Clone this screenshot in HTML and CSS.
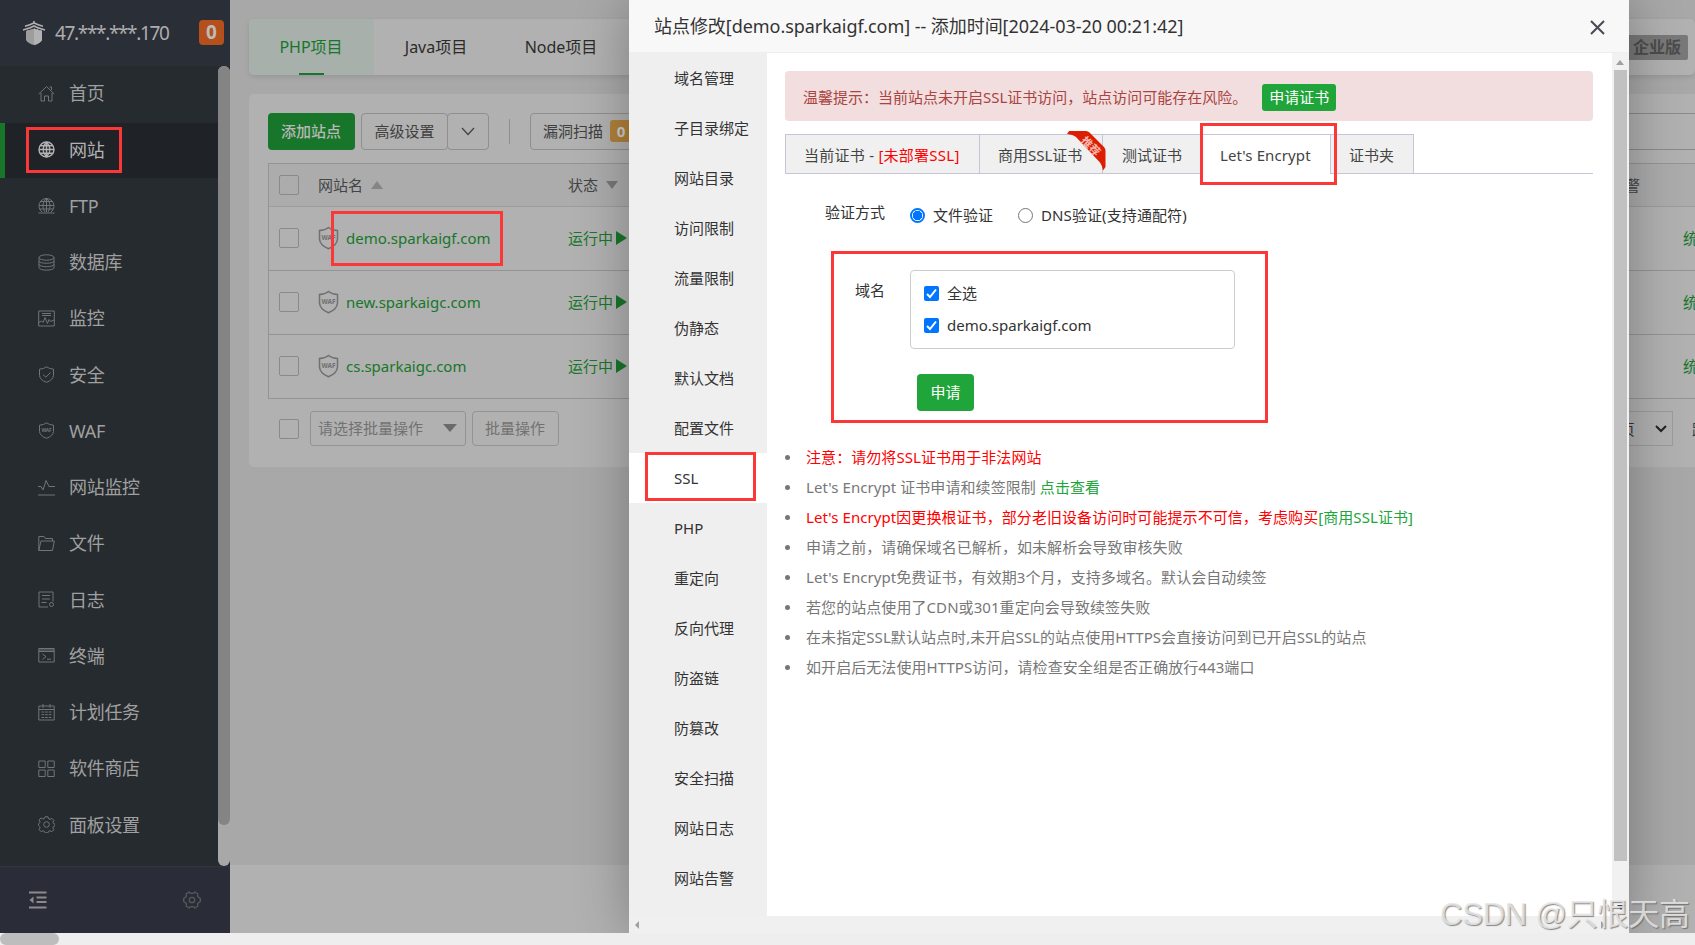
FILE: index.html
```html
<!DOCTYPE html>
<html lang="zh-CN">
<head>
<meta charset="utf-8">
<title>网站</title>
<link rel="stylesheet" href="styles.css">
</head>
<body>
<div class="app">
  <aside class="side">
    <div class="side-head">
      <svg class="logo" viewBox="0 0 24 26" width="24" height="26"><g fill="none" stroke="#b0b0b0" stroke-width="1.6"><path d="M12 1v3M3 6.2Q8 5 12 3Q16 5 21 6.2M1 10Q8 8.500 12 6Q16 8.500 23 10"/></g><path d="M4 10.500L12 8.500L20 10.500V20Q18 23.500 12 25Q6 23.500 4 20Z" fill="#9d9d9d"/><path d="M12 8.500L20 10.500V20Q18 23.500 12 25Z" fill="#b2b2b2"/><path d="M3 10.700L12 8L21 10.700" fill="none" stroke="#2a2e37" stroke-width="1" stroke-dasharray="2 1.500"/></svg>
      <span class="ip">47.***.***.170</span>
      <span class="count">0</span>
    </div>
    <div class="side-body">
      <nav class="menu">
        <a class="item"><svg viewBox="0 0 17 17"><path d="M.8 9L8.500 1.500L16.200 9M3 8v8h3.500v-5h4v5H14V8M11.500 2h2v3"/></svg>首页</a>
        <a class="item on"><svg viewBox="0 0 17 17"><circle cx="8.500" cy="8.500" r="7.500"/><path d="M1 8.500h15M8.500 1v15M2.500 4.800h12M2.500 12.200h12M8.500 1Q1.500 8.500 8.500 16M8.500 1Q15.500 8.500 8.500 16"/></svg>网站</a>
        <a class="item"><svg viewBox="0 0 17 17"><path d="M4 15A7.500 7.500 0 1 1 13 15M1 8.500h15M8.500 1v14M2.500 4.500h12M2 12h13M8.500 1Q2 8 7 15M8.500 1Q15 8 10 15M.5 16h16"/></svg><span>FTP</span></a>
        <a class="item"><svg viewBox="0 0 17 17"><ellipse cx="8.500" cy="3.500" rx="7.500" ry="2.700"/><path d="M1 3.500V13.500C1 17 16 17 16 13.500V3.500M1 7C1 10 16 10 16 7M1 10.300C1 13.500 16 13.500 16 10.300"/></svg>数据库</a>
        <a class="item"><svg viewBox="0 0 17 17"><path d="M.7 1h15.600v15H.7zM4 3.500h9M4 5.500h9M1 12.500l2.500-1.500 1.500 1.500 2-5 2.500 6 1.500-4 1.500 2 3.500-1.500"/></svg>监控</a>
        <a class="item"><svg viewBox="0 0 17 17"><path d="M8.500.8Q11 2.800 15.500 3.200V9.500Q15 14 8.500 16.300Q2 14 1.500 9.500V3.200Q6 2.800 8.500.8ZM5 8.500l2.800 2.700L12.500 6.500"/></svg>安全</a>
        <a class="item"><svg viewBox="0 0 17 17"><path d="M8.500.8Q11 2.800 15.500 3.200V9.500Q15 14 8.500 16.300Q2 14 1.500 9.500V3.200Q6 2.800 8.500.8Z"/><text x="8.500" y="10.200" class="waf-s">WAF</text></svg><span>WAF</span></a>
        <a class="item"><svg viewBox="0 0 17 17"><path d="M0 7.500h3l2 3.500L8 1.500l3 6h6M0 16h17"/></svg>网站监控</a>
        <a class="item"><svg viewBox="0 0 17 17"><path d="M.8 15.500V1.500H6L7.500 3.500H14.500V6M.8 15.500L3 6H16.300L14.500 15.500Z"/></svg>文件</a>
        <a class="item"><svg viewBox="0 0 17 17"><path d="M10 16H1V1H15V10.500M4 4.500h8M4 8h8M3.500 11.500h5"/><circle cx="13.500" cy="13.500" r="2"/></svg>日志</a>
        <a class="item"><svg viewBox="0 0 17 17"><path d="M.8 1.500h15.400v13.500H.8zM1 3h15M1 4.500h15M4.500 7l3.500 2.700-3.500 2.800M9 12.200h4"/></svg>终端</a>
        <a class="item"><svg viewBox="0 0 17 17"><path d="M.8 2h15.400v14H.8zM1 5.500h15M5 0v4M12 0v4"/><path d="M3.500 8h10M3.500 10.700h10M3.500 13.500h10" stroke-dasharray="2.700 .9"/></svg>计划任务</a>
        <a class="item"><svg viewBox="0 0 17 17"><path d="M.8 1h6.400v6.500H.8zM9.800 1h6.400v6.500H9.800zM.8 10h6.400v6.500H.8zM9.800 10h6.400v6.500H9.800z"/></svg>软件商店</a>
        <a class="item"><svg viewBox="0 0 17 17"><path d="M7 .8h3l.6 2 1.400.6 1.900-1 2 2-1 1.900.6 1.300 1.500.6v1.600l-1.500.6-.6 1.400 1 1.900-2 2-1.900-1-1.400.6-.6 1.500H7l-.6-1.500-1.400-.6-1.900 1-2-2 1-1.900-.6-1.400L.5 9.400V7.800l1-.6.6-1.300-1-1.900 2-2 1.900 1 1.400-.6z"/><circle cx="8.500" cy="8.500" r="2.800"/></svg>面板设置</a>
      </nav>
      <div class="side-track"><i></i></div>
    </div>
    <div class="side-foot">
      <svg width="18" height="18" viewBox="0 0 18 18"><path d="M0 1.500h17.500M7.500 6.500h10M7.500 11h10M0 16.500h17.500" stroke="#8b8b8b" stroke-width="2"/><path d="M4.500 5.500v7L.5 9z" fill="#8b8b8b"/></svg>
      <svg width="18" height="18" viewBox="0 0 18 18" fill="none" stroke="#555a5e" stroke-width="1.300"><path d="M6 1L7.500 2.300H10.500L12 1L14.800 2.800L14.600 5.500L17.300 7.500V10.500L14.600 12.500L14.800 15.200L12 17L10.500 15.700H7.500L6 17L3.200 15.200L3.400 12.500L.7 10.500V7.500L3.400 5.500L3.200 2.800Z" stroke-linejoin="round"/><circle cx="9" cy="9" r="2.700"/></svg>
    </div>
  </aside>

  <main class="main">
    <div class="tabs">
      <div class="tab on">PHP项目</div><div class="tab">Java项目</div><div class="tab">Node项目</div>
      <span class="edition">企业版</span>
    </div>
    <section class="panel">
      <div class="tools">
        <span class="btn add">添加站点</span>
        <span class="btn adv">高级设置</span><span class="btn more"><svg width="14" height="9" viewBox="0 0 14 9"><path d="M1 1l6 6.500L13 1" fill="none" stroke="#444" stroke-width="1.300"/></svg></span>
        <i class="sep"></i>
        <span class="btn scan">漏洞扫描<b>0</b></span>
        <span class="search"></span>
      </div>
      <div class="table">
        <div class="tr th"><i class="cb"></i><div class="name">网站名<i class="up"></i></div><div class="state">状态<i class="down"></i></div><div class="warn">告警</div></div>
        <div class="tr"><i class="cb"></i><div class="name"><svg class="shield" viewBox="0 0 21 24"><path d="M10.500 1.500Q14 4.300 19.500 4.500V13Q19 19.500 10.500 22.800Q2 19.500 1.500 13V4.500Q7 4.300 10.500 1.500Z"/><text x="10.500" y="13.500">WAF</text></svg>demo.sparkaigf.com</div><div class="state run">运行中<i class="play"></i></div><div class="stat">统计</div></div>
        <div class="tr"><i class="cb"></i><div class="name"><svg class="shield" viewBox="0 0 21 24"><path d="M10.500 1.500Q14 4.300 19.500 4.500V13Q19 19.500 10.500 22.800Q2 19.500 1.500 13V4.500Q7 4.300 10.500 1.500Z"/><text x="10.500" y="13.500">WAF</text></svg>new.sparkaigc.com</div><div class="state run">运行中<i class="play"></i></div><div class="stat">统计</div></div>
        <div class="tr"><i class="cb"></i><div class="name"><svg class="shield" viewBox="0 0 21 24"><path d="M10.500 1.500Q14 4.300 19.500 4.500V13Q19 19.500 10.500 22.800Q2 19.500 1.500 13V4.500Q7 4.300 10.500 1.500Z"/><text x="10.500" y="13.500">WAF</text></svg>cs.sparkaigc.com</div><div class="state run">运行中<i class="play"></i></div><div class="stat">统计</div></div>
      </div>
      <div class="batch">
        <i class="cb"></i><span class="sel">请选择批量操作<i></i></span><span class="bbtn">批量操作</span>
        <span class="pages">10条/页<svg width="12" height="8" viewBox="0 0 12 8"><path d="M1 1l5 5 5-5" fill="none" stroke="#222" stroke-width="2"/></svg></span><span class="jump">跳转</span>
      </div>
    </section>
    <footer class="strip"></footer>
  </main>
</div>
<div class="hbar"><i></i></div>

<div class="modal">
  <header class="m-head"><span>站点修改[demo.sparkaigf.com] -- 添加时间[2024-03-20 00:21:42]</span>
    <svg width="15" height="15" viewBox="0 0 15 15"><path d="M1 1l13 13M14 1L1 14" stroke="#4a4a55" stroke-width="2" fill="none"/></svg>
  </header>
  <div class="m-body">
    <nav class="m-nav">
      <a>域名管理</a><a>子目录绑定</a><a>网站目录</a><a>访问限制</a><a>流量限制</a><a>伪静态</a><a>默认文档</a><a>配置文件</a><a class="on">SSL</a><a>PHP</a><a>重定向</a><a>反向代理</a><a>防盗链</a><a>防篡改</a><a>安全扫描</a><a>网站日志</a><a>网站告警</a>
    </nav>
    <div class="m-main">
      <div class="alert">温馨提示：当前站点未开启SSL证书访问，站点访问可能存在风险。<span>申请证书</span></div>
      <div class="ssl-tabs">
        <div class="t1">当前证书 - <em>[未部署SSL]</em></div>
        <div class="t2">商用SSL证书<svg class="ribbon" width="40" height="40" viewBox="0 0 40 40"><path d="M0 3L2 0H19Q21 0 22.500 1.500L37 16Q38.500 17.500 38.500 19.500V36L36 39.500Q35 34 33 31.500L9 6Q6 3.500 0 3Z" fill="#dc1e05"/><text x="0" y="0" transform="translate(24.500 14.500) rotate(45)">推荐</text></svg></div>
        <div class="t3">测试证书</div>
        <div class="t4">Let's Encrypt</div>
        <div class="t5">证书夹</div>
      </div>
      <div class="verify"><span class="lab">验证方式</span><i class="radio on"></i><span class="opt1">文件验证</span><i class="radio"></i><span class="opt2">DNS验证(支持通配符)</span></div>
      <div class="domain">
        <span class="lab2">域名</span>
        <div class="dbox">
          <div><svg class="ck" viewBox="0 0 15 15"><rect width="15" height="15" rx="2" fill="#0075ff"/><path d="M3 8l3 3 6-7.500" stroke="#fff" stroke-width="2" fill="none"/></svg>全选</div>
          <div><svg class="ck" viewBox="0 0 15 15"><rect width="15" height="15" rx="2" fill="#0075ff"/><path d="M3 8l3 3 6-7.500" stroke="#fff" stroke-width="2" fill="none"/></svg>demo.sparkaigf.com</div>
        </div>
      </div>
      <span class="apply">申请</span>
      <ul class="notes">
        <li class="red">注意：请勿将SSL证书用于非法网站</li>
        <li>Let's Encrypt 证书申请和续签限制 <a>点击查看</a></li>
        <li class="red">Let's Encrypt因更换根证书，部分老旧设备访问时可能提示不可信，考虑购买<a>[商用SSL证书]</a></li>
        <li>申请之前，请确保域名已解析，如未解析会导致审核失败</li>
        <li>Let's Encrypt免费证书，有效期3个月，支持多域名。默认会自动续签</li>
        <li>若您的站点使用了CDN或301重定向会导致续签失败</li>
        <li>在未指定SSL默认站点时,未开启SSL的站点使用HTTPS会直接访问到已开启SSL的站点</li>
        <li>如开启后无法使用HTTPS访问，请检查安全组是否正确放行443端口</li>
      </ul>
    </div>
    <div class="vbar"><i class="va"></i><i class="vt"></i><i class="vd"></i></div>
  </div>
  <div class="m-hbar"><i class="hl"></i><i class="hr"></i></div>
</div>

<div class="mark k1"></div>
<div class="mark k2"></div>
<div class="mark k3"></div>
<div class="mark k4"></div>
<div class="mark k5"></div>
<div class="watermark">CSDN @只恨天高</div>
</body>
</html>
```
FILE: styles.css
```css
* { box-sizing: border-box; }
body { margin: 0; width: 1695px; height: 945px; overflow: hidden; position: relative; font: 15px/20px "Noto Sans", "Noto Sans CJK SC", sans-serif; color: #333; }
i, em { font-style: normal; }
i { display: block; flex: none; }
span, svg { flex: none; }
.app { display: flex; height: 933px; overflow: hidden; }

/* left navigation */
.side { width: 230px; flex: none; background: #262b2f; display: flex; flex-direction: column; color: #a0a0a0; }
.side-head { height: 66px; background: #2a2e37; border-bottom: 1px solid #2b3036; display: flex; align-items: center; padding: 0 6px 0 22px; }
.ip { font-size: 19px; margin-left: 9px; width: 130px; flex: 1; letter-spacing: -1.350px; color: #adadad; }
.count { width: 25px; height: 25px; border-radius: 4px; background: #b54f1c; color: #bbb; font: bold 19px/25px "Noto Sans", sans-serif; text-align: center; }
.side-body { flex: 1; display: flex; min-height: 0; }
.menu { width: 218px; padding-top: .75px; overflow: hidden; }
.item { height: 55px; margin-bottom: 1.25px; padding: 0 0 2px 38px; display: flex; align-items: center; gap: 14px; font-size: 18px; letter-spacing: -.3px; }
.item svg { width: 17px; height: 17px; fill: none; stroke: #70757a; stroke-width: 1; }
.item.on { background: #1f2328; border-left: 5px solid #18762a; padding-left: 33px; color: #b2b2b2; }
.item.on svg { stroke: #b2b2b2; stroke-width: 1.400; }
.waf-s { font: bold 5px "Noto Sans", sans-serif; text-anchor: middle; fill: #70757a; stroke: none; }
.side-track { width: 12px; background: #a8a8a8; border-radius: 6px; }
.side-track i { height: 759px; border-radius: 6px; background: #848484; }
.side-foot { height: 67px; background: #2a2d37; border-top: 1px solid #31353f; display: flex; align-items: center; justify-content: space-between; padding: 0 29px; }

/* page behind the dialog */
.main { flex: 1; min-width: 0; background: #a8a8a8; padding: 19px 0 0 19px; display: flex; flex-direction: column; overflow: hidden; }
.tabs { height: 56px; background: #b1b1b1; border-radius: 5px; box-shadow: 0 2px 5px rgba(0,0,0,.1); display: flex; font-size: 16px; color: #2b2b2b; align-items: center; flex: none; }
.tab { width: 125px; height: 56px; line-height: 56px; text-align: center; padding-right: 1px; }
.tab.on { background: linear-gradient(#18762a,#18762a) center bottom/25px 2px no-repeat #a7b0aa; color: #18762a; border-radius: 5px 0 0 5px; }
.edition { margin-left: auto; margin-right: 7px; background: #797979; color: #4c4c4c; height: 25px; line-height: 24px; padding: 0 7px; border-radius: 2px; font-weight: bold; }
.panel { margin-top: 19px; height: 373px; background: #b1b1b1; border-radius: 5px 0 0 5px; padding: 19px 0 0 19px; flex: none; }
.tools { height: 37px; display: flex; align-items: center; }
.btn { height: 37px; border: 1px solid #8f8f8f; border-radius: 4px; display: flex; align-items: center; justify-content: center; color: #3f3f3f; padding-bottom: 1px; }
.add { width: 87px; background: #18762a; border: 0; color: #b8b8b8; margin-right: 6px; padding-right: 1px; font-weight: 500; }
.adv { width: 87px; }
.more { width: 42px; margin-left: -1px; }
.sep { width: 1px; height: 25px; background: #8f8f8f; margin: 0 20px; }
.scan { width: 160px; justify-content: flex-start; padding-left: 12px; }
.scan b { margin-left: 7px; width: 22px; height: 22px; line-height: 22px; text-align: center; border-radius: 3px; background: #b0803a; color: #ccc; }
.search { margin-left: auto; width: 400px; height: 37px; border: solid #8a8a8a; border-width: 1px 0; }
.table { margin-top: 13px; border: 1px solid #949494; border-right: 0; }
.tr { height: 64px; display: flex; align-items: center; padding-left: 10px; border-bottom: 1px solid #949494; }
.tr:last-child { border: 0; height: 63px; }
.th { height: 43px; background: #acacac; color: #444; border-color: #9c9c9c; }
.tr:not(.th) { padding-bottom: 2px; }
.cb { width: 20px; height: 20px; border: 1px solid #8a8a8a; border-radius: 2px; }
.name { margin-left: 19px; width: 250px; display: flex; align-items: center; color: #18762a; }
.th .name, .th .state { color: #444; }
.shield { width: 21px; height: 24px; margin-right: 7px; fill: none; stroke: #707070; stroke-width: 1.500; }
.shield text { font: bold 6.500px "Noto Sans", sans-serif; text-anchor: middle; fill: #707070; stroke: none; }
.up { margin-left: 8px; border: 6.500px solid transparent; border-top: 0; border-bottom: 8px solid #858585; }
.down { margin-left: 8px; border: 6.500px solid transparent; border-bottom: 0; border-top: 8px solid #777; }
.state { display: flex; align-items: center; width: 90px; }
.run { color: #18762a; }
.play { margin-left: 3px; border: 7px solid transparent; border-right: 0; border-left: 11px solid #18762a; }
.warn { margin-left: auto; margin-right: 55px; }
.stat { margin-left: auto; margin-right: -18px; color: #18762a; }
.batch { display: flex; align-items: center; height: 35px; margin-top: 12px; padding-left: 11px; color: #717171; }
.sel { width: 156px; height: 35px; margin-left: 11px; border: 1px solid #939393; border-radius: 3px; display: flex; align-items: center; justify-content: space-between; padding: 0 8px 1px 7px; line-height: 31px; }
.sel i { border: 7px solid transparent; border-bottom: 0; border-top: 8px solid #6a6a6a; }
.bbtn { width: 87px; height: 35px; margin-left: 6px; border: 1px solid #939393; border-radius: 4px; text-align: center; line-height: 33px; padding-right: 1px; }
.pages { margin-left: auto; width: 100px; height: 35px; border: 1px solid #9b9b9b; display: flex; align-items: center; justify-content: space-between; padding: 0 5px 0 8px; color: #333; }
.jump { margin-left: 19px; margin-right: -27px; color: #333; }
.strip { margin: auto 0 0 -19px; height: 68px; background: #b1b1b1; flex: none; }
.hbar { height: 12px; background: #eee; }
.hbar i { width: 59px; height: 12px; border-radius: 6px; background: #bdbdbd; }

/* site settings dialog */
.modal { position: absolute; left: 629px; top: 0; width: 1000px; height: 933px; background: #fff; display: flex; flex-direction: column; box-shadow: 1px 1px 50px rgba(0,0,0,.3); clip-path: inset(0 -66px 0 -100px); }
.m-head { height: 53px; flex: none; background: #f8f8f8; border-bottom: 1px solid #eee; display: flex; align-items: center; justify-content: space-between; padding: 0 24px 0 25px; font-size: 18px; letter-spacing: -.05px; }
.m-head svg { margin-top: 3px; }
.m-body { height: 863px; display: flex; }
.m-nav { width: 138px; background: #efefef; display: flex; flex-direction: column; flex: none; }
.m-nav a { height: 50px; line-height: 50px; padding-left: 45px; white-space: nowrap; }
.m-nav .on { background: #fff; }
.m-main { flex: 1; padding: 18px 19px 0 18px; }
.alert { height: 50px; border-radius: 4px; background: #f2dede; color: #a94442; padding: 1px 0 0 18px; display: flex; align-items: center; }
.alert span { margin: 1px 0 0 15px; width: 74px; height: 27px; border-radius: 3px; background: #20a53a; color: #fff; text-align: center; line-height: 27px; }
.ssl-tabs { margin-top: 13px; height: 40px; display: flex; border-bottom: 1px solid #c8c4d8; color: #444; }
.ssl-tabs div { height: 40px; line-height: 41px; background: #f0f0f0; border: 1px solid #c8c4d8; border-left: 0; padding-left: 18px; position: relative; white-space: nowrap; }
.ssl-tabs .t1 { width: 195px; border-left: 1px solid #c8c4d8; letter-spacing: .25px; }
.ssl-tabs .t2 { width: 123px; }
.ssl-tabs .t3 { width: 99px; padding-left: 19px; }
.ssl-tabs .t4 { width: 129px; background: #fff; border-bottom: 0; letter-spacing: .1px; }
.ssl-tabs .t5 { width: 83px; }
em { color: #f00; }
.ribbon { position: absolute; left: 87px; top: -4px; z-index: 1; }
.ribbon text { font: bold 11px "Noto Sans CJK SC", sans-serif; text-anchor: middle; fill: #f8b8ac; dominant-baseline: central; }
.verify { margin-top: 31px; height: 20px; display: flex; align-items: center; padding-left: 40px; }
.lab { width: 85px; margin-top: -6px; }
.radio { width: 15px; height: 15px; border: 1px solid #767676; border-radius: 50%; margin-right: 8px; }
.radio.on { border: 2px solid #0075ff; background: radial-gradient(circle, #0075ff 4.500px, #fff 5px); }
.opt1 { width: 85px; }
.opt2 { letter-spacing: .1px; }
.domain { margin-top: 45px; display: flex; }
.lab2 { padding: 10px 0 0 70px; width: 125px; }
.dbox { width: 325px; height: 79px; border: 1px solid #ccc; border-radius: 4px; padding: 6px 13px; }
.dbox div { height: 32px; display: flex; align-items: center; gap: 8px; }
.ck { width: 15px; height: 15px; }
.apply { display: block; margin: 25px 0 0 132px; width: 57px; height: 37px; border-radius: 4px; background: #20a53a; color: #fff; text-align: center; line-height: 36px; }
.notes { margin: 31px 0 0; padding: 0 0 0 21px; color: #777; list-style: none; letter-spacing: .07px; }
.notes li { height: 30px; line-height: 30px; position: relative; white-space: nowrap; }
.notes li::before { content: ""; position: absolute; left: -21px; top: 13px; width: 5px; height: 5px; border-radius: 50%; background: #777; }
.notes .red { color: #f00; }
.notes a { color: #20a53a; }
.vbar { width: 17px; background: #f1f1f1; padding-top: 7px; }
.va { width: 8px; margin: 0 0 0 4px; border: 4px solid transparent; border-top: 0; border-bottom: 5px solid #a0a0a0; }
.vt { width: 13px; height: 791px; margin: 5px 0 0 2px; background: #c1c1c1; }
.vd { width: 8px; margin: 44px 0 0 5px; border: 4px solid transparent; border-bottom: 0; border-top: 5px solid #444; }
.m-hbar { height: 17px; background: #f0f0f0; display: flex; align-items: center; justify-content: space-between; padding: 0 24px 0 6px; }
.hl { border: 4px solid transparent; border-left: 0; border-right: 4px solid #a0a0a0; }
.hr { border: 4px solid transparent; border-right: 0; border-left: 4px solid #a0a0a0; }

/* highlight frames over the page */
.mark { position: absolute; border: 3px solid #fb3737; }
.k1 { left: 26px; top: 127px; width: 96px; height: 46px; }
.k2 { left: 331px; top: 211px; width: 172px; height: 55px; }
.k3 { left: 645px; top: 452px; width: 111px; height: 49px; }
.k4 { left: 1200px; top: 123px; width: 137px; height: 62px; }
.k5 { left: 831px; top: 251px; width: 437px; height: 172px; }
.watermark { position: absolute; left: 1440px; top: 895px; font: 31px/40px "Liberation Sans", "Noto Sans CJK SC", sans-serif; letter-spacing: -.2px; white-space: nowrap; color: rgba(232,232,232,.85); text-shadow: 1px 1px 1px rgba(90,90,90,.7); }
```
